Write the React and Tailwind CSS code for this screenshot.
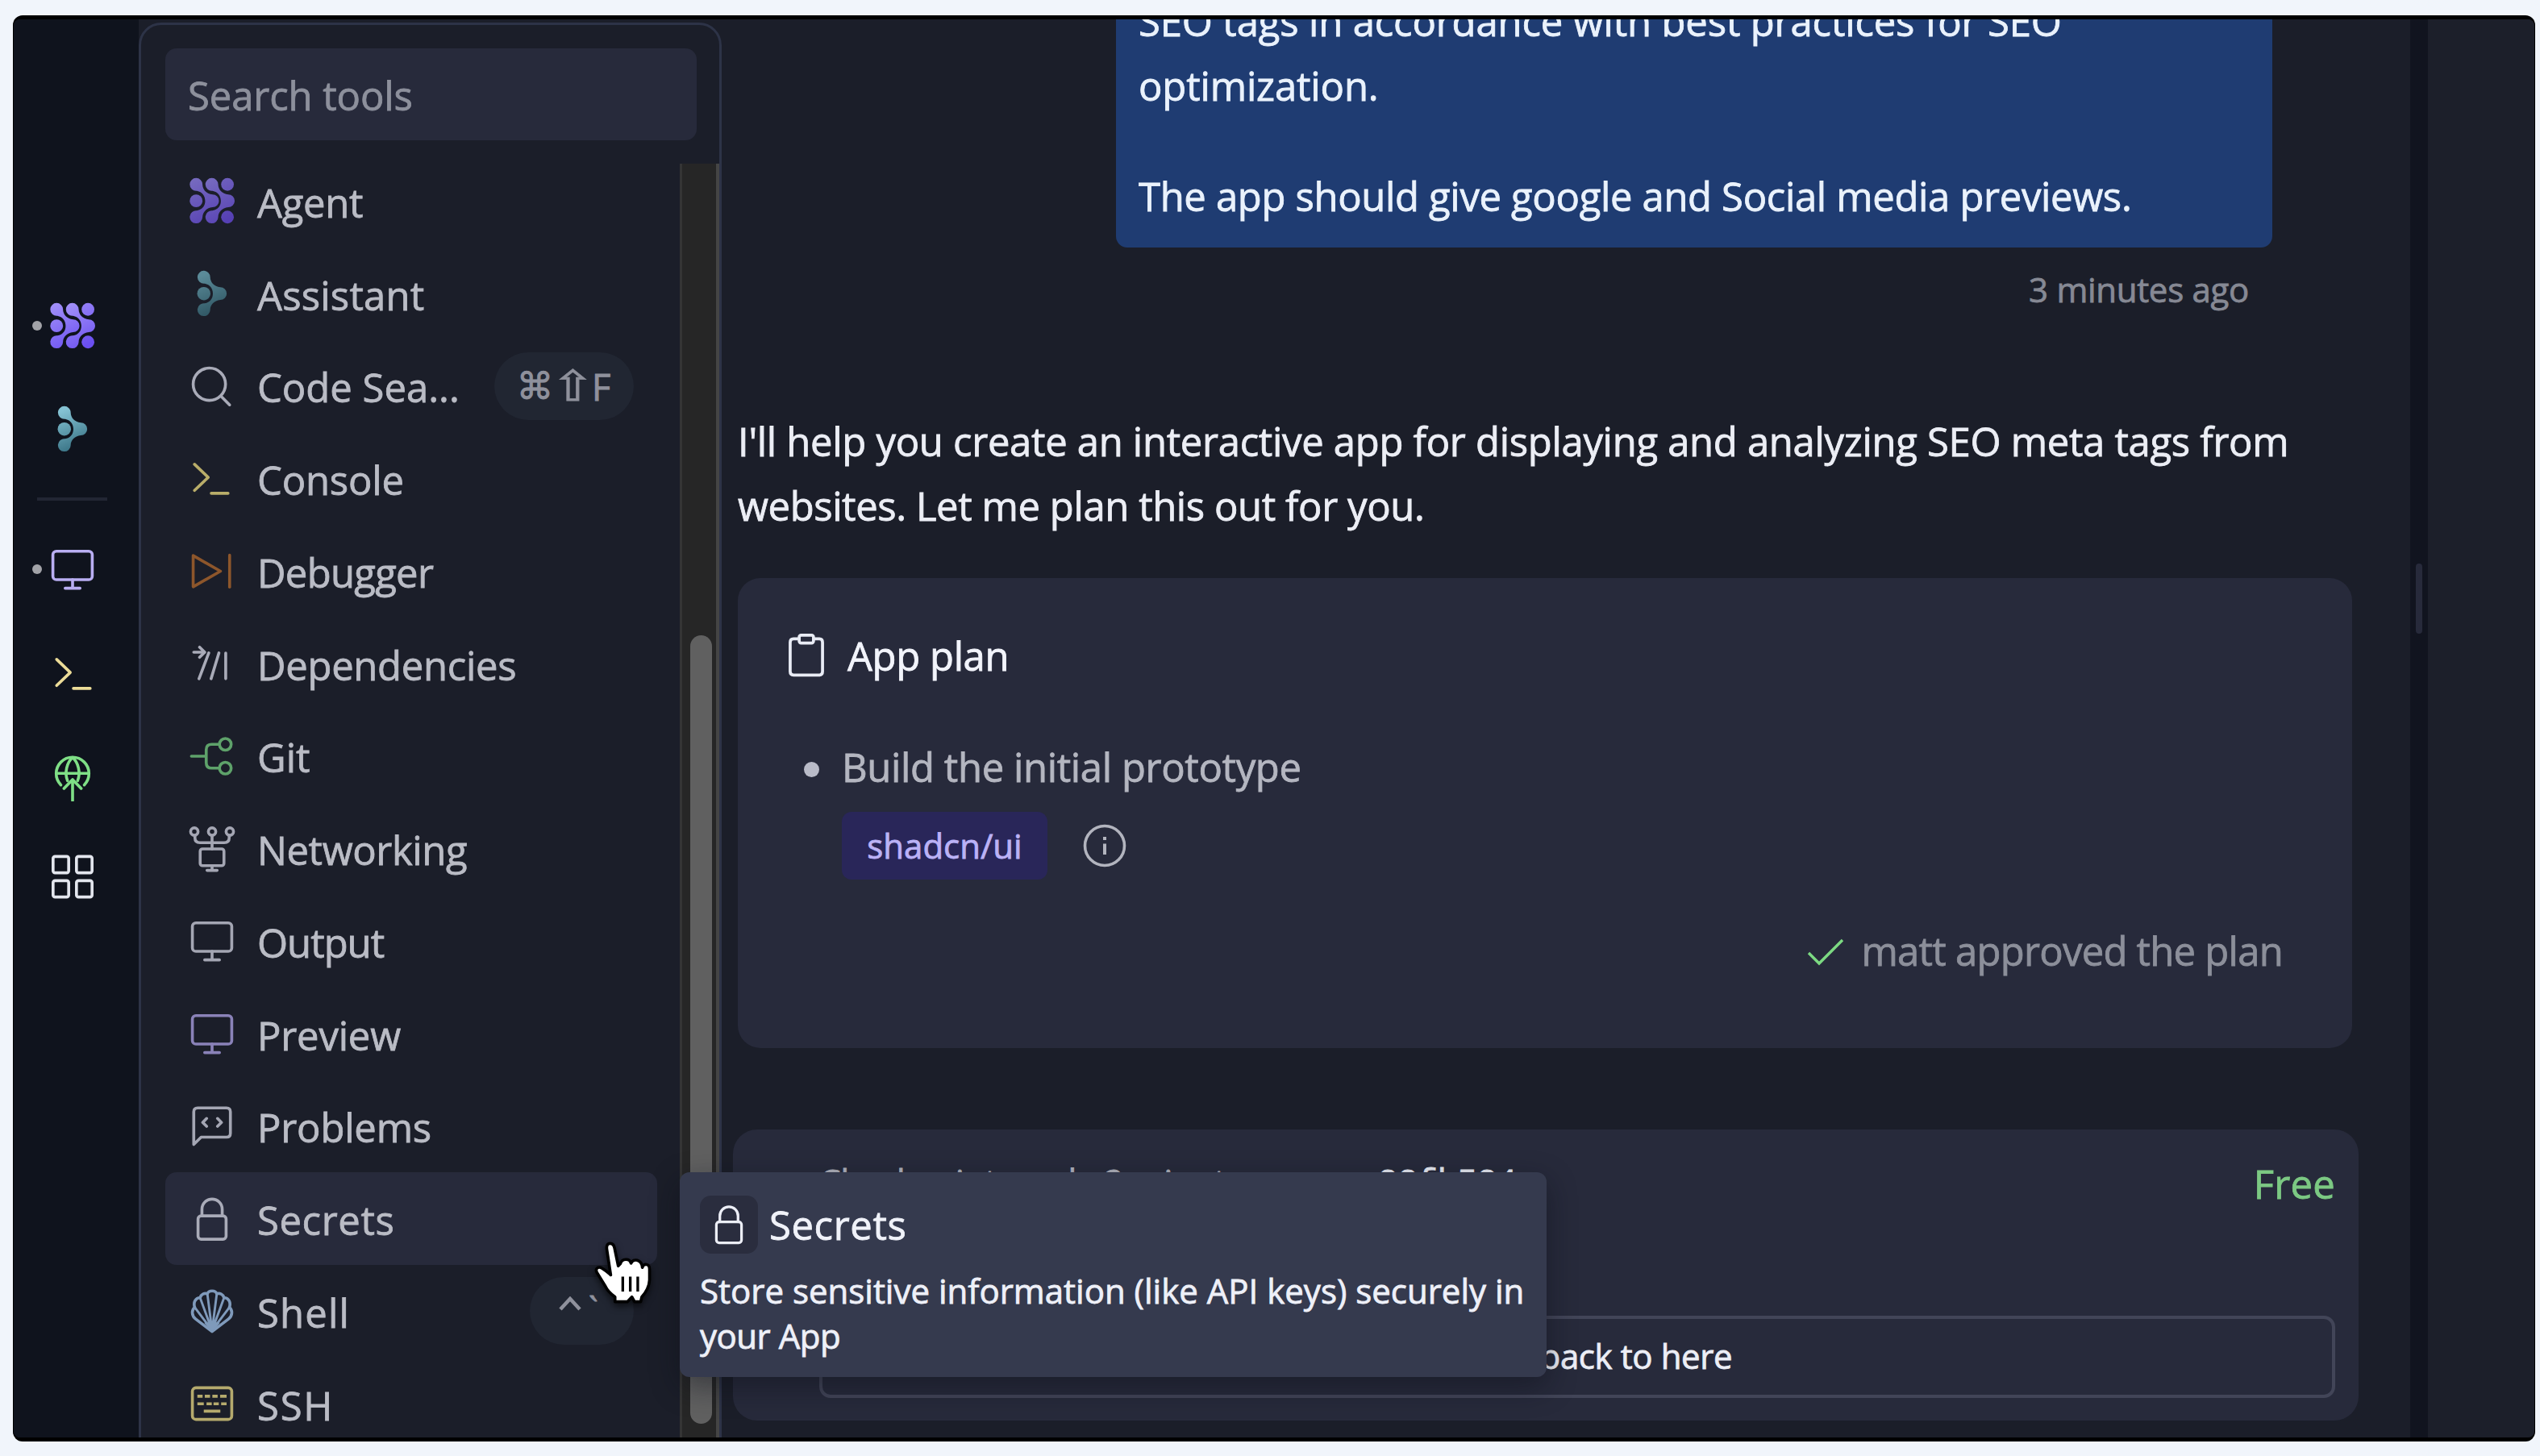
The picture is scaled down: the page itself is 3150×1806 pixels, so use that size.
import React from "react";

function Icon({ children, className = "" }) {
  return (
    <svg
      viewBox="0 0 24 24"
      fill="none"
      stroke="currentColor"
      strokeWidth="1.5"
      strokeLinecap="round"
      strokeLinejoin="round"
      className={"size-[58px] shrink-0 " + className}
    >
      {children}
    </svg>
  );
}

const LINK =
  "M0 -24A24 24 0 0 1 24 0C24 18 38 36 62 38A24 24 0 0 1 62 86C38 88 24 106 24 123A24 24 0 1 1 3 99C22 95 34 82 34 62C34 42 22 28 3 24A24 24 0 0 1 -24 0A24 24 0 0 1 0 -24Z";

function AgentIcon({ id, from, to }) {
  return (
    <svg viewBox="-26 -26 176 175" className="size-[58px] shrink-0">
      <defs>
        <linearGradient id={id} gradientUnits="userSpaceOnUse" x1="0" y1="-24" x2="90" y2="147">
          <stop offset="0" stopColor={from} />
          <stop offset="1" stopColor={to} />
        </linearGradient>
      </defs>
      <g fill={`url(#${id})`} transform="translate(2 0)">
        <path d={LINK} />
        <path d={LINK} transform="translate(59 0)" />
        <circle cx="0" cy="62" r="24" />
        <circle cx="118" cy="0" r="24" />
        <circle cx="118" cy="123" r="24" />
      </g>
    </svg>
  );
}

function AssistantIcon({ id, from, to }) {
  return (
    <svg viewBox="-57 -26 176 175" className="size-[58px] shrink-0">
      <defs>
        <linearGradient id={id} gradientUnits="userSpaceOnUse" x1="0" y1="-10" x2="60" y2="130">
          <stop offset="0" stopColor={from} />
          <stop offset="1" stopColor={to} />
        </linearGradient>
      </defs>
      <g fill={`url(#${id})`}>
        <path d={LINK} />
        <circle cx="0" cy="62" r="25" />
      </g>
    </svg>
  );
}

const Search = (p) => (
  <Icon {...p}>
    <circle cx="10.6" cy="11" r="8.3" />
    <path d="M16.6 17.2 21 21.6" />
  </Icon>
);
const Console = (p) => (
  <Icon {...p}>
    <path d="M3 4.5 10 11.2 3 17.9" />
    <path d="M11.6 19.4H20.2" />
  </Icon>
);
const Debugger = (p) => (
  <Icon {...p}>
    <path d="M2.3 4.2V20.2L16.3 12.2Z" />
    <path d="M21 4V20.4" />
  </Icon>
);
const Dependencies = (p) => (
  <Icon {...p}>
    <path d="M2.6 6.2H8" />
    <path d="M5.6 3.6 8.2 6.2 5.6 8.8" />
    <path d="M10.3 6.6 5.3 19.8M15.5 6.6 11.5 19.8M19 6.6V19.8" />
  </Icon>
);
const Git = (p) => (
  <Icon {...p}>
    <path d="M1.4 12H9M15.2 5.9H11.8Q9 5.9 9 8.7V15.3Q9 18.1 11.8 18.1H15.2" />
    <circle cx="18.8" cy="5.9" r="3" />
    <circle cx="18.8" cy="18.1" r="3" />
  </Icon>
);
const Networking = (p) => (
  <Icon {...p}>
    <circle cx="2.9" cy="3.1" r="1.9" />
    <circle cx="12" cy="3.1" r="1.9" />
    <circle cx="21.1" cy="3.1" r="1.9" />
    <path d="M3.2 5.2V6.2Q3.2 8.8 5.8 8.8H18.2Q20.8 8.8 20.8 6.2V5.2M12 5.2V12" />
    <rect x="5.9" y="12" width="12.2" height="8.6" rx="1.2" />
    <path d="M12 20.6V23M9.4 23H14.6" />
  </Icon>
);
const Monitor = (p) => (
  <Icon {...p}>
    <rect x="1.9" y="2.8" width="20.2" height="14.6" rx="1.8" />
    <path d="M12 17.4V21.8M8.2 21.8H15.8" />
  </Icon>
);
const Problems = (p) => (
  <Icon {...p}>
    <path d="M2.6 21.3V4.6Q2.6 2.6 4.6 2.6H19.4Q21.4 2.6 21.4 4.6V15.6Q21.4 17.6 19.4 17.6H6.4Z" />
    <path d="M9.2 8 7.2 10 9.2 12M14.8 8 16.8 10 14.8 12" />
  </Icon>
);
const Lock = (p) => (
  <Icon {...p}>
    <rect x="4.8" y="10.4" width="14.4" height="12" rx="1.6" />
    <path d="M6.8 10.4V7A5.2 5.2 0 0 1 17.2 7V10.4" />
  </Icon>
);
const Shell = (p) => (
  <Icon {...p}>
    <path d="M12 22.6 3.6 16.2C1.4 14.6 1.4 11.6 3.1 10.2C2.2 7.4 3.6 5.4 5.9 5.2C6.4 3.4 8 2.8 9.6 3.2C10.2 1.3 13.8 1.3 14.4 3.2C16 2.8 17.6 3.4 18.1 5.2C20.4 5.4 21.8 7.4 20.9 10.2C22.6 11.6 22.6 14.6 20.4 16.2Z" />
    <path d="M12 22 3.1 10.2M12 22 5.9 5.4M12 22 9.6 3.4M12 22 14.4 3.4M12 22 18.1 5.4M12 22 20.9 10.2" strokeWidth="1.2" />
    <path d="M12 22.6 8.4 18.2H15.6Z" fill="currentColor" strokeWidth="0.6" />
  </Icon>
);
const Keyboard = (p) => (
  <Icon {...p}>
    <rect x="1.9" y="3.9" width="20.2" height="16.2" rx="1.8" />
    <path
      d="M5.2 8.2H6.4M9 8.2H10.2M12.9 8.2H14.1M16.9 8.2H18.7M5.2 12.1H7M9.9 12.1H11.1M13.5 12.1H14.7M17.4 12.1H18.7M8.5 15.9H15.5"
      strokeLinecap="square"
    />
  </Icon>
);
const Deploy = (p) => (
  <Icon {...p}>
    <path d="M6 15.6A8.4 8.4 0 1 1 18 15.6" />
    <path d="M9.4 13.4C7.8 9.4 9 4 12 1.5C15 4 16.2 9.4 14.6 13.4M3.7 9.6H20.3" />
    <path d="M12 23.6V13M7.6 17.4 12 12.8 16.4 17.4" />
  </Icon>
);
const Tiles = (p) => (
  <Icon {...p}>
    <rect x="2" y="1.4" width="8" height="8.4" rx="1" />
    <rect x="14" y="1.4" width="8" height="8.4" rx="1" />
    <rect x="2" y="13.8" width="8" height="8.4" rx="1" />
    <rect x="14" y="13.8" width="8" height="8.4" rx="1" />
  </Icon>
);

const TOOLS = [
  { name: "Agent", icon: <AgentIcon id="la" from="#766abf" to="#5640b4" />, fit: "tracking-[-0.3px]" },
  { name: "Assistant", icon: <AssistantIcon id="ls" from="#5b8b99" to="#2f5663" />, fit: "tracking-[0.2px]" },
  { name: "Code Sea...", icon: <Search className="text-[#a9abb8]" />, fit: "", keys: "search" },
  { name: "Console", icon: <Console className="text-[#b9ad69]" />, fit: "tracking-[-0.2px]" },
  { name: "Debugger", icon: <Debugger className="text-[#8d562b]" />, fit: "tracking-[-0.7px]" },
  { name: "Dependencies", icon: <Dependencies className="text-[#a9abb8]" />, fit: "tracking-[-0.3px]" },
  { name: "Git", icon: <Git className="text-[#5ea26a]" />, fit: "" },
  { name: "Networking", icon: <Networking className="text-[#a4a6b3]" />, fit: "tracking-[-0.4px]" },
  { name: "Output", icon: <Monitor className="text-[#a4a6b3]" />, fit: "tracking-[-1px]" },
  { name: "Preview", icon: <Monitor className="text-[#8a82b8]" />, fit: "tracking-[-0.2px]" },
  { name: "Problems", icon: <Problems className="text-[#a4a6b3]" />, fit: "tracking-[-0.2px]" },
  { name: "Secrets", icon: <Lock className="text-[#a9abb8]" />, fit: "tracking-[0.6px]", active: true },
  { name: "Shell", icon: <Shell className="text-[#7f9abb]" />, fit: "tracking-[1.2px]", keys: "shell" },
  { name: "SSH", icon: <Keyboard className="text-[#b5aa6d]" />, fit: "tracking-[1.8px]" },
];

function Keys({ kind }) {
  if (kind === "search") {
    return (
      <div className="ml-auto mr-[29px] flex h-[84px] w-[173px] items-center justify-center gap-[5px] rounded-[42px] bg-[#212632] text-[#8f919c]">
        <span className="w-[42px] text-center font-['DejaVu_Sans'] text-[46px] leading-none">⌘</span>
        <span className="w-[40px] scale-x-125 text-center font-['DejaVu_Sans'] text-[52px] leading-none">⇧</span>
        <span className="w-[26px] text-center text-[46px] leading-none">F</span>
      </div>
    );
  }
  return (
    <div className="ml-auto mr-[29px] flex h-[84px] w-[129px] items-start rounded-[42px] bg-[#212632] pl-[36px] pt-[24px] text-[#8f919c]">
      <svg viewBox="0 0 28 18" fill="none" stroke="currentColor" strokeWidth="4.5" className="h-[18px] w-[28px]">
        <path d="M2 16 14 3 26 16" />
      </svg>
      <span className="-mt-[5px] ml-[9px] text-[42px] leading-none">`</span>
    </div>
  );
}

function ToolRow({ tool }) {
  return (
    <div
      className={
        "flex h-[114.75px] w-[610px] items-center rounded-[14px] pl-[29px] " +
        (tool.active ? "bg-[#272a3b]" : "")
      }
    >
      {tool.icon}
      <span className={"ml-[27px] pt-[3px] text-[49px] leading-[80px] text-[#babcc5] " + tool.fit}>{tool.name}</span>
      {tool.keys && <Keys kind={tool.keys} />}
    </div>
  );
}

function Rail() {
  return (
    <nav className="flex w-[155px] shrink-0 flex-col bg-[#0f131d] pt-[351px]">
      <div className="flex items-center pl-[23px]">
        <i className="mr-[9px] size-[12px] rounded-full bg-[#a2a3a8]" />
        <AgentIcon id="ra" from="#a18ff8" to="#6a4ff0" />
      </div>
      <div className="mt-[70px] flex pl-[44px]">
        <AssistantIcon id="rs" from="#84c2d3" to="#3a7486" />
      </div>
      <div className="ml-[29px] mt-[56px] h-[4px] w-[87px] bg-[#222634]" />
      <div className="mt-[56px] flex items-center pl-[23px]">
        <i className="mr-[9px] size-[12px] rounded-full bg-[#a2a3a8]" />
        <Monitor className="text-[#b9aef2]" />
      </div>
      <Console className="ml-[46px] mt-[72px] text-[#ecdc98]" />
      <Deploy className="ml-[44px] mt-[71px] text-[#7fdf86]" />
      <Tiles className="ml-[44px] mt-[65px] text-[#e3e6ee]" />
    </nav>
  );
}

function ToolsPanel() {
  return (
    <section className="mt-[4px] flex h-[1800px] w-[723px] shrink-0 flex-col rounded-[28px] border-[3px] border-[#2d3347] bg-[#1b1e29]">
      <div className="ml-[30px] mt-[29px] flex h-[114px] w-[659px] shrink-0 items-center rounded-[14px] bg-[#272a3b] pl-[28px]">
        <span className="pt-0.5 text-[49px] leading-[80px] tracking-[-0.1px] text-[#8d909c]">Search tools</span>
      </div>
      <div className="mt-[18px] flex min-h-0 flex-1">
        <div className="ml-[30px] w-[638px] shrink-0">
          {TOOLS.map((t) => (
            <ToolRow key={t.name} tool={t} />
          ))}
        </div>
        <div className="mt-[11px] flex-1 border-l-[3px] border-r-4 border-l-[#353535] border-r-[#454545] bg-[#262626]">
          <div className="ml-[10px] mt-[585px] h-[978px] w-[27px] rounded-full bg-[#606060]" />
        </div>
      </div>
    </section>
  );
}

function PlanCard() {
  return (
    <div className="ml-[20px] mt-[50px] flex h-[583px] w-[2002px] flex-col rounded-[28px] bg-[#272a3b]">
      <div className="ml-[57px] mt-[56px] flex h-[80px] items-center">
        <svg
          viewBox="0 0 24 24"
          fill="none"
          stroke="#e9ecf5"
          strokeWidth="1.6"
          strokeLinejoin="round"
          className="size-[56px]"
        >
          <path d="M8.2 3.2H5.2Q3.4 3.2 3.4 5V20.6Q3.4 22.4 5.2 22.4H18.8Q20.6 22.4 20.6 20.6V5Q20.6 3.2 18.8 3.2H15.8" />
          <rect x="8.2" y="1.2" width="7.6" height="4.2" rx="1" />
        </svg>
        <span className="ml-[23px] text-[49px] leading-[80px] tracking-[-0.4px] text-[#f2f4fb]">App plan</span>
      </div>
      <div className="ml-[82px] mt-[58px] flex h-[80px] items-center">
        <i className="mt-[6px] size-[19px] rounded-full bg-[#b9bbc8]" />
        <span className="ml-[28px] text-[49px] leading-[80px] tracking-[-0.38px] text-[#b4b6c0]">
          Build the initial prototype
        </span>
      </div>
      <div className="ml-[129px] mt-[16px] flex h-[84px] items-center">
        <span className="flex h-[84px] w-[255px] items-center justify-center rounded-[12px] bg-[#292659] text-[42px] leading-[60px] text-[#bbb2f6]">
          shadcn/ui
        </span>
        <svg viewBox="0 0 54 54" fill="none" stroke="#b2b4be" strokeWidth="3.6" className="ml-[44px] size-[54px]">
          <circle cx="27" cy="27" r="24.5" />
          <path d="M27 24.5V38M27 16V20" strokeWidth="4" />
        </svg>
      </div>
      <div className="mr-[86px] mt-[48px] flex h-[80px] items-center justify-end">
        <svg viewBox="0 0 46 34" fill="none" stroke="#7cd982" strokeWidth="3.4" className="mr-[21px] mt-[3px] h-[34px] w-[46px]">
          <path d="M2 18 15 31 44 2" />
        </svg>
        <span className="text-[49px] leading-[80px] tracking-[-0.75px] text-[#8c8f9a]">matt approved the plan</span>
      </div>
    </div>
  );
}

function CheckpointCard() {
  return (
    <div className="ml-[14px] mt-[101px] flex h-[361px] w-[2016px] flex-col rounded-[30px] bg-[#272a3b] pl-[107px] pr-[29px]">
      <div className="mt-[27px] flex h-[80px] items-center whitespace-nowrap">
        <span className="pb-[6px] text-[42px] leading-[60px] text-[#b2b4be]">Checkpoint made 2 minutes ago</span>
        <span className="ml-auto mr-[911px] w-[175px] pb-[2px] font-['Liberation_Mono'] text-[41px] leading-[60px] text-[#e9ecf5]">
          22fb524
        </span>
        <span className="text-[49px] leading-[80px] tracking-[0.2px] text-[#7cc983]">Free</span>
      </div>
      <div className="mt-[124px] flex h-[102px] items-center justify-center rounded-[14px] border-4 border-[#424558] pb-[2px] pl-[17px]">
        <svg
          viewBox="0 0 24 24"
          fill="none"
          stroke="#e9ecf5"
          strokeWidth="1.8"
          strokeLinecap="round"
          strokeLinejoin="round"
          className="mr-[12px] size-[46px]"
        >
          <path d="M3 12A9 9 0 1 0 6 5.3L3 8M3 3V8H8" />
        </svg>
        <span className="text-[42px] leading-[60px] tracking-[-0.4px] text-[#eceef6]">Rollback to here</span>
      </div>
    </div>
  );
}

function Chat() {
  return (
    <main className="flex w-[2094px] shrink-0 flex-col bg-[#1b1e29]">
      <div className="ml-[489px] h-[283px] w-[1434px] overflow-hidden rounded-b-[14px] bg-[#1f3c72] pl-[28px] text-[49px] leading-[80px] text-[#eaf2fc]">
        <p className="-mt-[38px] tracking-[-0.15px]">
          SEO tags in accordance with best practices for SEO
          <br />
          optimization.
        </p>
        <p className="mt-[57px] tracking-[-0.34px]">The app should give google and Social media previews.</p>
      </div>
      <div className="mr-[200px] mt-[22px] text-right text-[42px] leading-[60px] tracking-[-0.3px] text-[#868994]">
        3 minutes ago
      </div>
      <p className="ml-[20px] mt-[118px] whitespace-nowrap text-[49px] leading-[80px] tracking-[-0.31px] text-[#eceef5]">
        I'll help you create an interactive app for displaying and analyzing SEO meta tags from
        <br />
        <span className="tracking-[-0.42px]">websites. Let me plan this out for you.</span>
      </p>
      <PlanCard />
      <CheckpointCard />
    </main>
  );
}

function Tooltip() {
  return (
    <div className="absolute left-[826px] top-[1430px] h-[254px] w-[1075px] rounded-[12px] bg-[#353a4e] pl-[25px] pt-[29px] shadow-[0_12px_36px_rgba(10,14,22,0.45)]">
      <div className="flex h-[72px] items-center">
        <span className="flex size-[72px] items-center justify-center rounded-[14px] bg-[#2a2d3e]">
          <Lock className="!size-[52px] text-[#eceef6]" />
        </span>
        <span className="ml-[14px] text-[49px] leading-[72px] tracking-[0.6px] text-[#f0f2f9]">Secrets</span>
      </div>
      <p className="mt-[18px] whitespace-nowrap text-[42px] leading-[56px] text-[#eef0f8]">
        Store sensitive information (like API keys) securely in
        <br />
        <span className="tracking-[-0.5px]">your App</span>
      </p>
    </div>
  );
}

function HandCursor() {
  return (
    <svg
      viewBox="285 55 225 250"
      className="absolute left-[718px] top-[1514px] h-[83px] w-[75px] overflow-visible drop-shadow-[0_4px_4px_rgba(0,0,0,0.6)]"
    >
      <path
        d="M350 68C338 68 335 80 338 94L352 186C340 176 326 162 314 158C302 155 294 164 300 176L332 228C340 246 352 256 368 268V286H414L431 268L441 286H464L468 268C484 250 496 226 497 204V164C497 142 474 142 470 158C468 128 436 122 428 142C422 122 394 124 388 144L380 152L366 84C364 74 360 68 350 68Z"
        fill="#ffffff"
        stroke="#000000"
        strokeWidth="11"
        strokeLinejoin="round"
      />
      <path d="M397 192V248M425 192V248M453 192V248" stroke="#000000" strokeWidth="10" />
    </svg>
  );
}

export default function App() {
  return (
    <div className="h-[1806px] w-[3150px] overflow-hidden bg-[#f1f5fb] pl-[16px] pt-[19px] font-['Open_Sans','Noto_Sans',sans-serif] [-webkit-text-stroke:0.8px]">
      <div className="h-[1769px] w-[3128px] overflow-hidden rounded-[12px] bg-black px-px py-[5px]">
        <div className="relative flex h-[1759px] overflow-hidden rounded-[8px] bg-[#1b1e29]">
          <Rail />
          <ToolsPanel />
          <Chat />
          <div className="w-[22px] shrink-0 bg-[#11141f] pl-[7px] pt-[675px]">
            <div className="h-[87px] w-[8px] rounded-full bg-[#272a3b]" />
          </div>
          <aside className="flex-1 bg-[#1c1f2a]" />
          <Tooltip />
          <HandCursor />
        </div>
      </div>
    </div>
  );
}
